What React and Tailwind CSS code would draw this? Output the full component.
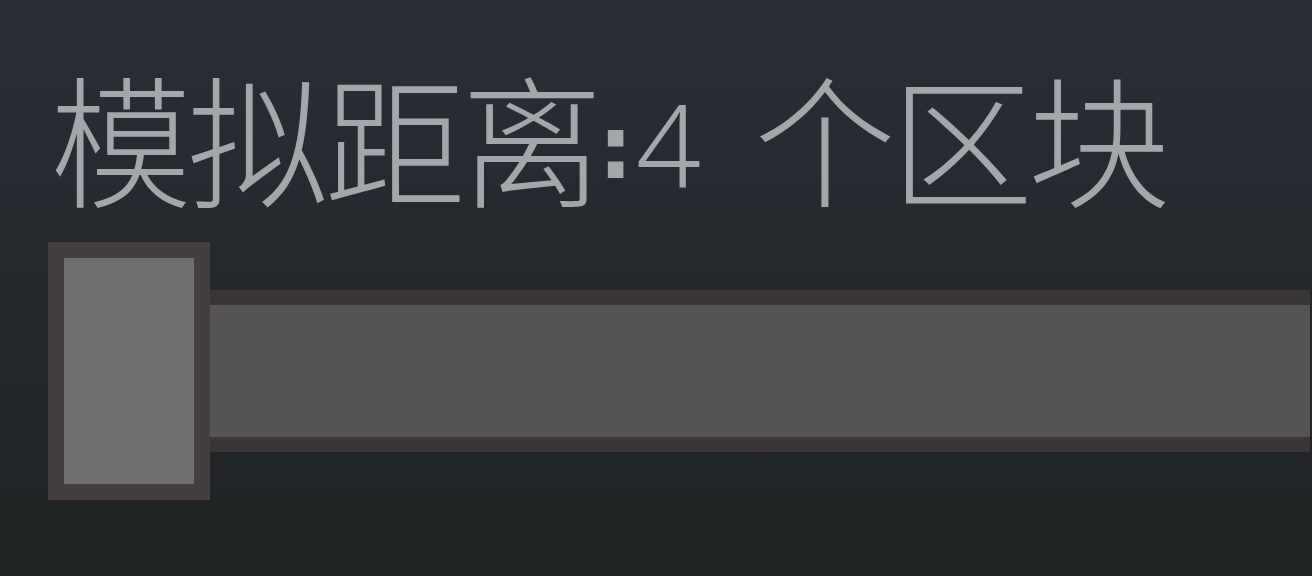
export default function App() {
  const cjk = "font-['Noto_Sans_CJK_SC','Noto_Sans_CJK_JP',sans-serif]";
  const ch = "w-[137px] tracking-[-5px]";
  return (
    <div className="w-[1312px] h-[576px] overflow-hidden bg-gradient-to-b from-[#2a2f36] via-[#23282d] to-[#1e2222] flex flex-col">
      <div className={`flex items-start pt-[64px] pl-[50px] text-[#a3a6aa] text-[142px] leading-none font-extralight ${cjk} h-[180px] whitespace-nowrap`}>
        <span className={ch}>模</span>
        <span className={ch}>拟</span>
        <span className={ch}>距</span>
        <span className={ch}>离</span>
        <span className="w-[38px] text-[88px] mt-[40px] font-['DejaVu_Sans',sans-serif] font-bold">:</span>
        <span className="w-[118px] text-[114px] mt-[22px] font-['Noto_Sans',sans-serif] font-light">4</span>
        <span className={ch}>个</span>
        <span className={ch}>区</span>
        <span className={ch}>块</span>
      </div>
      <div className="flex items-center pl-[48px] pr-[2px] mt-[62px]">
        <div className="w-[162px] h-[258px] bg-[#433f3e] p-[16px] shrink-0">
          <div className="w-full h-full bg-[#6f6e6d]"></div>
        </div>
        <div className="flex-1 h-[162px] bg-[#3a3635] py-[15px]">
          <div className="w-full h-full bg-[#555353]"></div>
        </div>
      </div>
    </div>
  );
}
